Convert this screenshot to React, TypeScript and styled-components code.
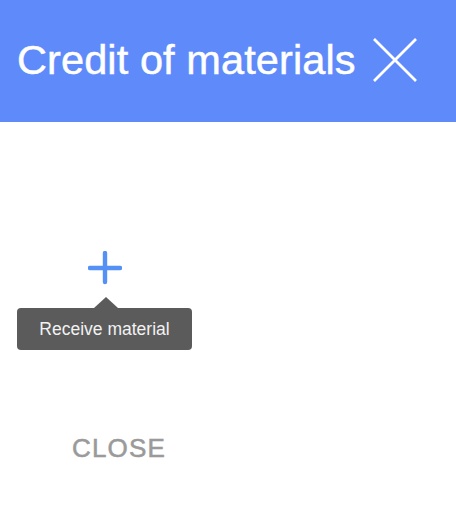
import styled, { createGlobalStyle } from "styled-components";

const GlobalStyle = createGlobalStyle`
  html, body {
    margin: 0;
    padding: 0;
    background: #ffffff;
    font-family: "Liberation Sans", Arial, sans-serif;
  }
`;

const Page = styled.div`
  width: 456px;
  height: 508px;
  display: flex;
  flex-direction: column;
  background: #ffffff;
`;

const Header = styled.header`
  height: 122px;
  box-sizing: border-box;
  background: #5f8afa;
  display: flex;
  align-items: center;
  padding: 0 0 2px 17px;
  gap: 16px;
`;

const Title = styled.h1`
  margin: 0;
  font-size: 41.5px;
  font-weight: 400;
  letter-spacing: 0.1px;
  color: #ffffff;
  -webkit-text-stroke: 0.5px #ffffff;
  white-space: nowrap;
`;

const IconButton = styled.button`
  border: none;
  background: transparent;
  padding: 0;
  display: flex;
  cursor: pointer;
`;

const Body = styled.div`
  flex: 1;
  display: flex;
  flex-direction: column;
  padding: 129px 0 0 17px;
`;

const ActionWrap = styled.div`
  position: relative;
  width: 175px;
  display: flex;
  justify-content: center;
`;

const AddButton = styled.button`
  border: none;
  background: transparent;
  padding: 0;
  display: flex;
  cursor: pointer;
`;

const Tooltip = styled.div`
  position: absolute;
  top: 57px;
  left: 0;
  width: 175px;
  height: 42px;
  box-sizing: border-box;
  background: #5b5b5b;
  border-radius: 4px;
  color: #f2f2f2;
  font-size: 17.5px;
  display: flex;
  align-items: center;
  justify-content: center;

  &::before {
    content: "";
    position: absolute;
    top: -11px;
    left: 77px;
    border-left: 12px solid transparent;
    border-right: 12px solid transparent;
    border-bottom: 11px solid #5b5b5b;
  }
`;

const Footer = styled.div`
  margin-top: 148px;
  width: 204px;
  display: flex;
  justify-content: center;
`;

const CloseText = styled.button`
  border: none;
  background: transparent;
  padding: 0;
  font-family: "Liberation Sans", Arial, sans-serif;
  font-size: 26px;
  font-weight: 400;
  color: #9a9a9a;
  -webkit-text-stroke: 0.55px #9a9a9a;
  letter-spacing: 1.2px;
  cursor: pointer;
`;

export default function App() {
  return (
    <Page>
      <GlobalStyle />
      <Header>
        <Title>Credit of materials</Title>
        <IconButton aria-label="close">
          <svg width="46" height="44" viewBox="0 0 46 44">
            <path
              d="M2 1 L44 43 M44 1 L2 43"
              stroke="#ffffff"
              strokeWidth="2.8"
              fill="none"
            />
          </svg>
        </IconButton>
      </Header>
      <Body>
        <ActionWrap>
          <AddButton aria-label="Receive material">
            <svg width="34" height="34" viewBox="0 0 34 34">
              <path
                d="M17 2 V31 M2 17 H32"
                stroke="#5590f5"
                strokeWidth="4.4"
                strokeLinecap="round"
                fill="none"
              />
            </svg>
          </AddButton>
          <Tooltip>Receive material</Tooltip>
        </ActionWrap>
        <Footer>
          <CloseText>CLOSE</CloseText>
        </Footer>
      </Body>
    </Page>
  );
}
